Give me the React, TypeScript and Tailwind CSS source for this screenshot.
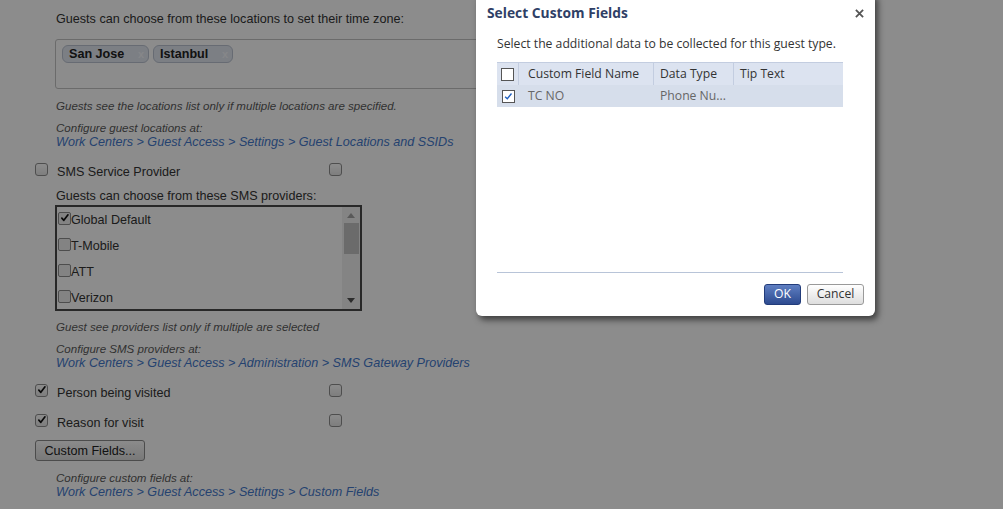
import React from "react";

function Box({ checked, className = "" }: { checked?: boolean; className?: string }) {
  return (
    <div
      className={`relative w-[13px] h-[13px] shrink-0 rounded-[3px] border border-[#8f8f8f] bg-gradient-to-b from-[#ffffff] to-[#e6e6e6] ${className}`}
    >
      {checked && (
        <svg viewBox="0 0 12 12" className="absolute left-[1px] top-[0px] w-[10px] h-[10px]">
          <path d="M2.2 6.2 L4.6 8.8 L9.6 2.2" fill="none" stroke="#111" strokeWidth="2" strokeLinecap="round" strokeLinejoin="round" />
        </svg>
      )}
    </div>
  );
}

function ListItem({ label, checked }: { label: string; checked?: boolean }) {
  return (
    <div className="flex items-center h-[26px] pl-[1px]">
      <div className="relative w-[13px] h-[13px] -mt-[4px] rounded-[2px] border border-[#8c8c8c] bg-[#eeeeee]">
        {checked && (
          <svg viewBox="0 0 12 12" className="absolute left-[1px] top-[0px] w-[10px] h-[10px]">
            <path d="M2.2 6.2 L4.6 8.8 L9.6 2.2" fill="none" stroke="#111" strokeWidth="2" strokeLinecap="round" strokeLinejoin="round" />
          </svg>
        )}
      </div>
      <span className="text-[12.6px] text-[#333]">{label}</span>
    </div>
  );
}

function Tag({ label, w }: { label: string; w: string }) {
  return (
    <div className={`flex items-center justify-between h-[18px] ${w} rounded-[6px] border border-[#bcc4d2] bg-[#e2e7f1] pl-[6px] pr-[4px]`}>
      <span className="text-[12.6px] font-bold text-[#222]">{label}</span>
      <span className="text-[11px] font-bold text-[#f4f6fa]">x</span>
    </div>
  );
}

function TwoBoxRow({ label, checked }: { label: string; checked?: boolean }) {
  return (
    <div className="flex items-center h-[14px] pl-[35px]">
      <Box checked={checked} className="-mt-[4px]" />
      <span className="ml-[9px] w-[272px] pt-[2px] text-[12.6px] text-[#333]">{label}</span>
      <Box className="-mt-[4px]" />
    </div>
  );
}

function Hint({ children, className = "" }: { children: React.ReactNode; className?: string }) {
  return <div className={`pl-[56px] text-[11.55px] italic leading-[14px] text-[#5a5a5a] ${className}`}>{children}</div>;
}

function Link({ children }: { children: React.ReactNode }) {
  return <div className="pl-[56px] text-[12.6px] italic leading-[14px] text-[#4479cc]">{children}</div>;
}

export default function App() {
  return (
    <div className="relative w-[1003px] h-[509px] overflow-hidden bg-white" style={{ fontFamily: '"Liberation Sans", Arial, sans-serif' }}>
      <div className="pt-[12px] leading-[14px]">
        <div className="pl-[56px] text-[12.6px] text-[#333]">Guests can choose from these locations to set their time zone:</div>
        <div className="ml-[55px] mt-[13px] w-[480px] h-[50px] rounded-[3px] border border-[#c4c4c4] bg-white flex gap-[4px] items-start pt-[5px] pl-[6px]">
          <Tag label="San Jose" w="w-[87px]" />
          <Tag label="Istanbul" w="w-[80px]" />
        </div>
        <Hint className="mt-[10px]">Guests see the locations list only if multiple locations are specified.</Hint>
        <Hint className="mt-[8px]">Configure guest locations at:</Hint>
        <Link>Work Centers &gt; Guest Access &gt; Settings &gt; Guest Locations and SSIDs</Link>

        <div className="mt-[15px]">
          <TwoBoxRow label="SMS Service Provider" />
        </div>
        <div className="mt-[11px] pl-[56px] text-[12.6px] text-[#333]">Guests can choose from these SMS providers:</div>
        <div className="ml-[55px] mt-[2px] w-[307px] h-[106px] border-2 border-[#4a4a4a] bg-white flex">
          <div className="flex-1 pt-[0px]">
            <ListItem label="Global Default" checked />
            <ListItem label="T-Mobile" />
            <ListItem label="ATT" />
            <ListItem label="Verizon" />
          </div>
          <div className="w-[18px] bg-[#f0f0f0] flex flex-col items-center">
            <svg viewBox="0 0 8 5" className="w-[8px] h-[5px] mt-[6px]"><path d="M0 5 L4 0 L8 5 Z" fill="#a3a3a3" /></svg>
            <div className="mt-[5px] w-[15px] h-[31px] bg-[#c3c3c3]" />
            <div className="flex-1" />
            <svg viewBox="0 0 8 5" className="w-[8px] h-[5px] mb-[6px]"><path d="M0 0 L8 0 L4 5 Z" fill="#505050" /></svg>
          </div>
        </div>
        <Hint className="mt-[9px]">Guest see providers list only if multiple are selected</Hint>
        <Hint className="mt-[8px]">Configure SMS providers at:</Hint>
        <Link>Work Centers &gt; Guest Access &gt; Administration &gt; SMS Gateway Providers</Link>

        <div className="mt-[15px]">
          <TwoBoxRow label="Person being visited" checked />
        </div>
        <div className="mt-[16px]">
          <TwoBoxRow label="Reason for visit" checked />
        </div>
        <div className="pl-[35px] mt-[11px]">
          <button className="h-[21px] w-[110px] rounded-[3px] border border-[#8a8a8a] bg-gradient-to-b from-[#fdfdfd] to-[#dcdcdc] text-[12.6px] text-[#222] leading-[18px]">
            Custom Fields...
          </button>
        </div>
        <Hint className="mt-[10px]">Configure custom fields at:</Hint>
        <Link>Work Centers &gt; Guest Access &gt; Settings &gt; Custom Fields</Link>
      </div>

      {/* dim overlay */}
      <div className="absolute inset-0 bg-black/[0.45]" />

      {/* modal */}
      <div
        className="absolute left-[476px] top-[-8px] w-[399px] h-[324px] rounded-[6px] bg-white shadow-[3px_4px_6px_rgba(0,0,0,0.55)] flex flex-col"
        style={{ fontFamily: '"Open Sans", "Noto Sans", sans-serif' }}
      >
        <div className="flex items-center justify-between h-[18px] mt-[12px] pl-[11px] pr-[11px]">
          <span className="text-[13.8px] font-bold text-[#2f3f66]">Select Custom Fields</span>
          <svg viewBox="0 0 10 10" className="w-[9px] h-[9px]"><path d="M1 1 L9 9 M9 1 L1 9" stroke="#555" strokeWidth="2" /></svg>
        </div>
        <div className="pl-[21px] mt-[14px] text-[12.2px] text-[#333] leading-[16px]">Select the additional data to be collected for this guest type.</div>
        <div className="ml-[21px] mt-[10px] w-[346px] text-[12.2px]">
          <div className="flex h-[23px] bg-[#dce3f0] border-t border-[#c3cde0] items-center">
            <div className="w-[22px] h-full flex items-center justify-center border-r border-[#c3cde0]">
              <div className="w-[13px] h-[13px] border border-[#555] bg-white" />
            </div>
            <div className="w-[135px] h-full flex items-center pl-[9px] border-r border-[#c3cde0] text-[#333]">Custom Field Name</div>
            <div className="w-[80px] h-full flex items-center pl-[6px] border-r border-[#c3cde0] text-[#333]">Data Type</div>
            <div className="flex-1 h-full flex items-center pl-[6px] text-[#333]">Tip Text</div>
          </div>
          <div className="flex h-[22px] bg-[#d6deeb] items-center">
            <div className="w-[22px] h-full flex items-center justify-center">
              <div className="relative w-[13px] h-[13px] border border-[#555] bg-white">
                <svg viewBox="0 0 12 12" className="absolute left-[1px] top-[1px] w-[9px] h-[9px]">
                  <path d="M1.5 6.2 L4.4 9 L10 2" fill="none" stroke="#2060c0" strokeWidth="1.8" />
                </svg>
              </div>
            </div>
            <div className="w-[135px] pl-[9px] text-[#666]">TC NO</div>
            <div className="w-[80px] pl-[6px] text-[#666]">Phone Nu...</div>
            <div className="flex-1" />
          </div>
        </div>
        <div className="flex-1" />
        <div className="ml-[21px] w-[346px] h-px bg-[#b8c4d8]" />
        <div className="flex justify-end gap-[6px] pr-[11px] mt-[11px] mb-[11px]">
          <button className="h-[21px] w-[37px] rounded-[3px] border border-[#223c7a] bg-gradient-to-b from-[#5f7fc2] to-[#2e4b90] text-[12.2px] text-white">OK</button>
          <button className="h-[21px] w-[57px] rounded-[3px] border border-[#9a9a9a] bg-gradient-to-b from-[#ffffff] to-[#dedede] text-[12.2px] text-[#333]">Cancel</button>
        </div>
      </div>
    </div>
  );
}
